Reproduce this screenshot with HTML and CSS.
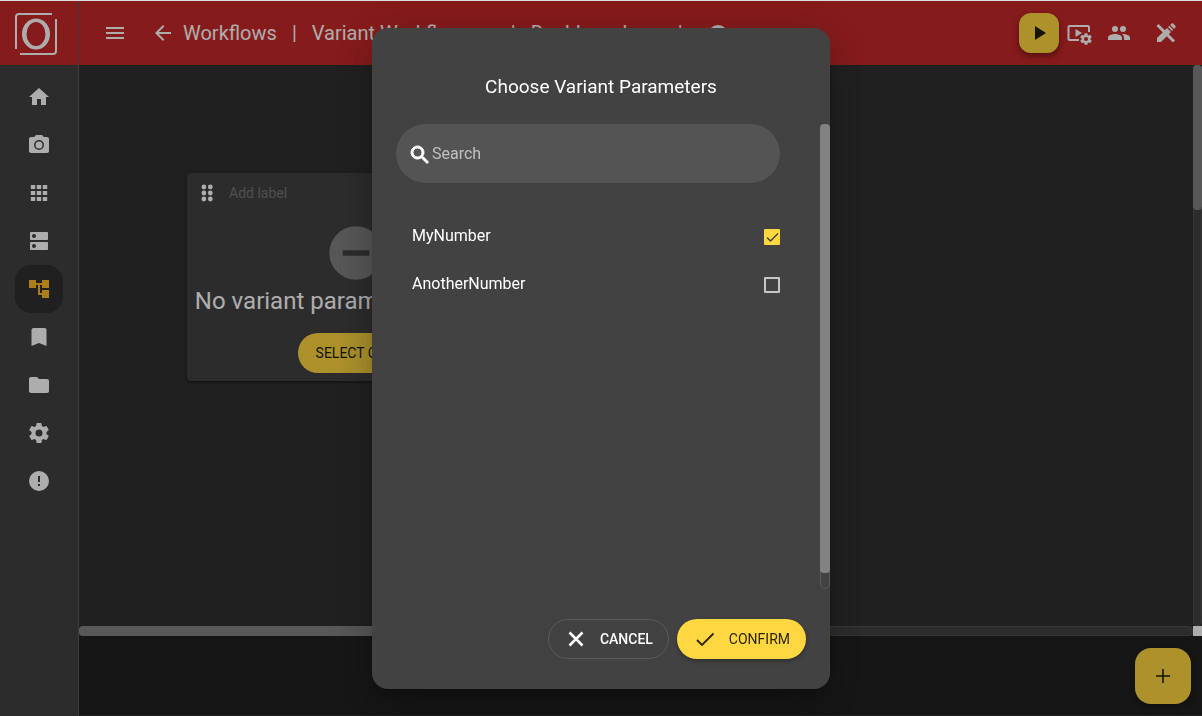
FILE: index.html
```html
<!DOCTYPE html>
<html lang="en">
<head>
    <meta charset="UTF-8">
    <meta name="viewport" content="width=device-width, initial-scale=1">
    <title>Variant Workflows</title>
    <link rel="stylesheet" href="styles.css">
</head>
<body>

<div class="app">
    <aside class="sidebar">
        <a href="#" class="logo" aria-label="Start">
            <svg width="48" height="48" viewBox="0 0 48 48">
                <path d="M4 40V8a3 3 0 0 1 3-3h33M44 10v32a3 3 0 0 1-3 3H8" fill="none" stroke="currentColor" stroke-width="2"/>
                <path d="M24 9.500a14 15.500 0 1 0 0 31 14 15.500 0 0 0 0-31zm0 3.500a9.500 12 0 1 1 0 24 9.500 12 0 0 1 0-24z" fill="currentColor"/>
            </svg>
        </a>
        <nav class="nav">
            <a href="#" class="nav-item" aria-label="Home">
                <svg class="icon" viewBox="0 0 24 24"><path d="M10 20v-6h4v6h5v-8h3L12 3 2 12h3v8z"/></svg>
            </a>
            <a href="#" class="nav-item" aria-label="Camera">
                <svg class="icon" viewBox="0 0 24 24"><path d="M20 4h-3.200L15 2H9L7.200 4H4c-1.100 0-2 .9-2 2v12c0 1.100.9 2 2 2h16c1.100 0 2-.9 2-2V6c0-1.100-.9-2-2-2zM12 17a5 5 0 1 1 0-10 5 5 0 0 1 0 10zm0-1.500a3.500 3.500 0 1 0 0-7 3.500 3.500 0 0 0 0 7z"/></svg>
            </a>
            <a href="#" class="nav-item" aria-label="Apps">
                <svg class="icon" viewBox="0 0 24 24"><path d="M3.800 4h4.400v4H3.800zM9.800 4h4.400v4H9.800zM15.800 4h4.400v4h-4.400zM3.800 10h4.400v4H3.800zM9.800 10h4.400v4H9.800zM15.800 10h4.400v4h-4.400zM3.800 16h4.400v4H3.800zM9.800 16h4.400v4H9.800zM15.800 16h4.400v4h-4.400z"/></svg>
            </a>
            <a href="#" class="nav-item" aria-label="Storage">
                <svg class="icon" viewBox="0 0 24 24"><path d="M20 13H4c-.55 0-1 .45-1 1v6c0 .55.45 1 1 1h16c.55 0 1-.45 1-1v-6c0-.55-.45-1-1-1zM7 19a2 2 0 1 1 0-4 2 2 0 0 1 0 4zM20 3H4c-.55 0-1 .45-1 1v6c0 .55.45 1 1 1h16c.55 0 1-.45 1-1V4c0-.55-.45-1-1-1zM7 9a2 2 0 1 1 0-4 2 2 0 0 1 0 4z"/></svg>
            </a>
            <a href="#" class="nav-item active" aria-label="Workflows">
                <svg class="icon" viewBox="0 0 24 24"><path d="M22 11V3h-7v3H9V3H2v8h7V8h2v10h4v3h7v-8h-7v3h-2V8h2v3z"/></svg>
            </a>
            <a href="#" class="nav-item" aria-label="Bookmarks">
                <svg class="icon" viewBox="0 0 24 24"><path d="M17.500 3h-11c-1 0-2 .9-2 2v16l7.500-3 7.500 3V5c0-1.100-.9-2-2-2z"/></svg>
            </a>
            <a href="#" class="nav-item" aria-label="Files">
                <svg class="icon" viewBox="0 0 24 24"><path d="M10 4H4c-1.100 0-2 .9-2 2v12c0 1.100.9 2 2 2h16c1.100 0 2-.9 2-2V8c0-1.100-.9-2-2-2h-8z"/></svg>
            </a>
            <a href="#" class="nav-item" aria-label="Settings">
                <svg class="icon" viewBox="0 0 24 24"><use href="#gear"/></svg>
            </a>
            <a href="#" class="nav-item" aria-label="Errors">
                <svg class="icon" viewBox="0 0 24 24"><path d="M12 2a10 10 0 1 0 0 20 10 10 0 0 0 0-20zm1 15h-2v-2h2zm0-4h-2V7h2z"/></svg>
            </a>
        </nav>
    </aside>

    <div class="page">
        <header class="toolbar">
            <button class="icon-button menu" aria-label="Menu">
                <svg class="icon" viewBox="0 0 24 24"><path d="M3 18h18v-2H3zm0-5h18v-2H3zm0-7v2h18V6z"/></svg>
            </button>
            <a href="#" class="back">
                <svg class="icon" viewBox="0 0 24 24"><path d="M20 11H7.830l5.590-5.590L12 4l-8 8 8 8 1.410-1.410L7.830 13H20z"/></svg>
                Workflows
            </a>
            <span class="divider">|</span>
            <a href="#" class="crumb crumb-wide">Variant Workflows</a>
            <span class="divider">|</span>
            <a href="#" class="crumb crumb-last">Dashboard</a>
            <span class="divider">|</span>
            <button class="icon-button help" aria-label="Help">
                <svg class="icon" viewBox="0 0 24 24"><path d="M12 4a10 10 0 1 0 0 20 10 10 0 0 0 0-20zm1 15h-2v-2h2zm0-4h-2V9h2z"/></svg>
            </button>

            <div class="actions">
                <button class="play" aria-label="Run">
                    <svg class="icon" viewBox="0 0 24 24"><path d="M8 5v14l11-7z"/></svg>
                </button>
                <button class="icon-button" aria-label="Run settings">
                    <svg class="icon" viewBox="0 0 24 24">
                        <path d="M2.500 4H21c1.100 0 2 .9 2 2v5h-2V6H2.500v12H12v2H2.500c-1.100 0-2-.9-2-2V6c0-1.100.9-2 2-2zM8.500 8v8l6.500-4z"/>
                        <svg x="12" y="11" width="14" height="14" viewBox="0 0 24 24"><use href="#gear"/></svg>
                    </svg>
                </button>
                <button class="icon-button" aria-label="People">
                    <svg class="icon" viewBox="0 0 24 24"><path d="M16 11a3 3 0 1 0 0-6 3 3 0 0 0 0 6zm-8 0a3 3 0 1 0 0-6 3 3 0 0 0 0 6zm0 2c-2.330 0-7 1.170-7 3.500V19h14v-2.500c0-2.330-4.670-3.500-7-3.500zm8 0c-.29 0-.62.02-.97.05 1.160.84 1.970 1.970 1.970 3.450V19h6v-2.500c0-2.330-4.670-3.500-7-3.500z"/></svg>
                </button>
                <button class="icon-button design" aria-label="Design">
                    <svg class="icon" viewBox="0 0 24 24">
                        <path d="M3.500 4l16.500 16.500" fill="none" stroke="currentColor" stroke-width="3"/>
                        <path d="M3 21v-4L13 7l4 4L7 21zM14 6l1.200-1.200 4 4L18 10zM16.200 4l1.300-1.300c.5-.5 1.300-.5 1.800 0l2 2c.5.5.5 1.300 0 1.800L20.100 7.900z"/>
                    </svg>
                </button>
            </div>
        </header>

        <div class="workspace">
            <main class="board">
                <section class="card">
                    <div class="card-header">
                        <svg class="icon" viewBox="0 0 24 24"><path d="M6.500 6a2.400 2.400 0 1 0 4.800 0 2.400 2.400 0 1 0-4.800 0M12.900 6a2.400 2.400 0 1 0 4.800 0 2.400 2.400 0 1 0-4.800 0M6.500 12a2.400 2.400 0 1 0 4.800 0 2.400 2.400 0 1 0-4.800 0M12.900 12a2.400 2.400 0 1 0 4.800 0 2.400 2.400 0 1 0-4.800 0M6.500 18a2.400 2.400 0 1 0 4.800 0 2.400 2.400 0 1 0-4.800 0M12.900 18a2.400 2.400 0 1 0 4.800 0 2.400 2.400 0 1 0-4.800 0"/></svg>
                        <input type="text" class="card-label" placeholder="Add label" aria-label="Label">
                    </div>
                    <svg class="empty-icon" viewBox="0 0 24 24"><path d="M12 2a10 10 0 1 0 0 20 10 10 0 0 0 0-20zm5 11H7v-2h10z"/></svg>
                    <h2>No variant parameters chosen</h2>
                    <button class="select-button">SELECT ONE</button>
                </section>
            </main>
            <div class="scroll-v"><div class="thumb"></div></div>
            <div class="scroll-h"><div class="thumb"></div></div>
            <div class="scroll-corner"></div>
        </div>

        <footer class="bottom-bar">
            <button class="add-button" aria-label="Add">
                <svg class="icon" viewBox="0 0 24 24"><path d="M5 12h14M12 5v14" stroke="currentColor" stroke-width="1.600"/></svg>
            </button>
        </footer>
    </div>
</div>

<div class="overlay">
    <form class="dialog" role="dialog" aria-labelledby="dialog-title">
        <h1 id="dialog-title">Choose Variant Parameters</h1>
        <div class="dialog-body">
            <div class="dialog-content">
                <label class="search">
                    <svg class="icon" viewBox="0 -2 24 24"><path d="M15.500 14h-.79l-.28-.27A6.500 6.500 0 1 0 13.730 14.430l.27.28v.79l5 5L20.500 19zM9.500 14a4.500 4.500 0 1 1 0-9 4.500 4.500 0 0 1 0 9z" stroke="currentColor"/></svg>
                    <input type="text" placeholder="Search">
                </label>
                <label class="option">
                    MyNumber
                    <span class="check">
                        <input type="checkbox" checked>
                        <svg viewBox="0 0 16 16"><path d="M3 8.500l3.500 3.500L14 4.500"/></svg>
                    </span>
                </label>
                <label class="option">
                    AnotherNumber
                    <span class="check">
                        <input type="checkbox">
                        <svg viewBox="0 0 16 16"><path d="M3 8.500l3.500 3.500L14 4.500"/></svg>
                    </span>
                </label>
            </div>
            <div class="dialog-scroll"><div class="thumb"></div></div>
        </div>
        <div class="dialog-actions">
            <button type="button" class="cancel">
                <svg class="icon" viewBox="0 0 24 24"><path d="M5.500 5.500l13 13M18.500 5.500l-13 13" stroke="currentColor" stroke-width="2.600"/></svg>
                CANCEL
            </button>
            <button type="submit" class="confirm">
                <svg class="icon" viewBox="0 0 24 24"><path d="M4 13l5 5L20.500 6.500" fill="none" stroke="currentColor" stroke-width="1.800"/></svg>
                CONFIRM
            </button>
        </div>
    </form>
</div>

<!-- shared shapes -->
<svg width="0" height="0" class="defs">
    <defs>
        <path id="gear" d="M19.430 12.980c.04-.32.07-.64.07-.98s-.03-.66-.07-.98l2.110-1.650c.19-.15.24-.42.12-.64l-2-3.460c-.12-.22-.39-.3-.61-.22l-2.490 1c-.52-.4-1.080-.73-1.690-.98l-.38-2.650A.49.49 0 0 0 14 2h-4c-.25 0-.46.18-.49.42l-.38 2.650c-.61.25-1.170.59-1.690.98l-2.490-1c-.23-.09-.49 0-.61.22l-2 3.460c-.13.22-.07.49.12.64l2.110 1.650c-.04.32-.07.65-.07.98s.03.66.07.98l-2.110 1.650c-.19.15-.24.42-.12.64l2 3.460c.12.22.39.3.61.22l2.490-1c.52.4 1.080.73 1.690.98l.38 2.650c.03.24.24.42.49.42h4c.25 0 .46-.18.49-.42l.38-2.650c.61-.25 1.170-.59 1.690-.98l2.490 1c.23.09.49 0 .61-.22l2-3.460c.12-.22.07-.49-.12-.64zM12 15.500a3.500 3.500 0 1 1 0-7 3.500 3.500 0 0 1 0 7z"/>
    </defs>
</svg>

</body>
</html>
```
FILE: styles.css
```css
* {
    box-sizing: border-box;
}

body {
    margin: 0;
    font-family: Roboto, "Liberation Sans", sans-serif;
    color: #fff;
    background-color: #303030;
}

button,
input {
    font-family: inherit;
    color: inherit;
}

button {
    display: flex;
    align-items: center;
    justify-content: center;
    margin: 0;
    padding: 0;
    border: none;
    background: none;
    font-size: 14px;
    cursor: pointer;
}

a {
    color: inherit;
    text-decoration: none;
}

.defs {
    position: absolute;
}

.icon {
    width: 24px;
    height: 24px;
    flex: none;
    fill: currentColor;
    overflow: visible;
}

.app {
    display: flex;
    height: 100vh;
    border-top: 1px solid #e0e0e0;
}

/* sidebar */
.sidebar {
    width: 79px;
    flex: none;
    background-color: #424242;
    border-right: 1px solid #5a5a5a;
}

.logo {
    display: flex;
    align-items: center;
    height: 64px;
    padding-left: 12px;
    background-color: #c62828;
}

.nav {
    display: flex;
    flex-direction: column;
    align-items: center;
    padding-top: 8px;
}

.nav-item {
    display: flex;
    align-items: center;
    justify-content: center;
    width: 48px;
    height: 48px;
    border-radius: 16px;
}

.nav-item.active {
    background-color: #303030;
    color: #ffb92a;
}

/* toolbar */
.page {
    flex: 1;
    min-width: 0;
    display: flex;
    flex-direction: column;
}

.toolbar {
    display: flex;
    align-items: center;
    height: 64px;
    flex: none;
    padding-right: 16px;
    background-color: #c62828;
    font-size: 20px;
    white-space: nowrap;
}

.icon-button {
    width: 40px;
    height: 40px;
}

.menu {
    margin: 0 16px;
}

.back {
    display: flex;
    align-items: center;
    gap: 8px;
}

.divider {
    margin: 0 15px;
}

.crumb-wide {
    width: 184px;
}

.crumb-last {
    width: 132px;
}

.actions {
    display: flex;
    align-items: center;
    margin-left: auto;
}

.play {
    width: 40px;
    height: 40px;
    border-radius: 12px;
    background-color: #ffd740;
    color: #211c08;
    box-shadow: 0 3px 6px rgba(0, 0, 0, .4);
}

.design {
    margin-left: 7px;
}

/* board */
.workspace {
    flex: 1;
    min-height: 0;
    display: grid;
    grid-template-columns: 1fr 9px;
    grid-template-rows: 1fr 10px;
}

.board {
    overflow: hidden;
    padding: 108px;
}

.card {
    display: flex;
    flex-direction: column;
    align-items: center;
    width: 337px;
    padding-bottom: 8px;
    border-radius: 4px;
    background-color: #424242;
    box-shadow: 0 1px 3px rgba(0, 0, 0, .5);
}

.card-header {
    display: flex;
    align-items: center;
    align-self: stretch;
    gap: 8px;
    height: 40px;
    margin-bottom: 8px;
    padding: 0 8px;
}

.card-label {
    flex: 1;
    border: none;
    background: none;
    font-size: 14px;
}

.card-label::placeholder {
    color: #757575;
}

.empty-icon {
    width: 64px;
    height: 64px;
    fill: #828282;
}

.card h2 {
    margin: 0 0 16px;
    font-size: 24px;
    font-weight: 400;
    line-height: 32px;
    white-space: nowrap;
}

.select-button {
    height: 40px;
    padding: 0 18px;
    border-radius: 20px;
    background-color: #ffd740;
    color: #211c08;
}

/* scrollbars */
.scroll-v,
.scroll-h {
    border: 1px solid #505050;
    border-radius: 4px;
    background-color: #424242;
}

.thumb {
    border-radius: 4px;
    background-color: #828282;
}

.scroll-v .thumb {
    height: 26%;
    margin: -1px;
}

.scroll-h .thumb {
    width: 50%;
    height: 10px;
    margin: -1px;
}

.scroll-corner {
    background-color: #fff;
}

/* bottom bar */
.bottom-bar {
    display: flex;
    justify-content: flex-end;
    flex: none;
    height: 80px;
    padding: 12px 11px;
    border-bottom: 1px solid #303030;
    background-color: #212121;
}

.add-button {
    width: 56px;
    height: 56px;
    border-radius: 16px;
    background-color: #ffd740;
    color: #211c08;
    box-shadow: 0 3px 6px rgba(0, 0, 0, .3);
}

/* dialog */
.overlay {
    position: fixed;
    inset: 1px 0 0;
    display: flex;
    align-items: center;
    justify-content: center;
    background-color: rgba(0, 0, 0, .32);
}

.dialog {
    width: 458px;
    max-width: 80vw;
    border-radius: 16px;
    background-color: #424242;
    box-shadow: 0 11px 15px -7px rgba(0, 0, 0, .2),
        0 24px 38px 3px rgba(0, 0, 0, .14),
        0 9px 46px 8px rgba(0, 0, 0, .12);
}

.dialog h1 {
    margin: 0;
    padding: 43px 24px 21px;
    font-size: 19px;
    font-weight: 400;
    line-height: 32px;
    text-align: center;
}

.dialog-body {
    display: flex;
    height: 65vh;
}

.dialog-content {
    flex: 1;
    padding: 0 40px 0 24px;
}

.search {
    display: flex;
    align-items: center;
    height: 59px;
    margin-bottom: 29px;
    padding: 0 12px;
    border-radius: 30px;
    background-color: #545454;
}

.search input {
    flex: 1;
    padding: 0;
    border: none;
    outline: none;
    background: none;
    font-size: 16px;
}

.search input::placeholder {
    color: #c0c0c0;
}

.option {
    display: flex;
    align-items: center;
    justify-content: space-between;
    height: 48px;
    padding-left: 16px;
    font-size: 16px;
}

.check {
    position: relative;
    height: 16px;
    margin-top: 2px;
}

.check input {
    appearance: none;
    display: block;
    width: 16px;
    height: 16px;
    margin: 0;
    border: 2px solid #c6c6c6;
    border-radius: 1px;
}

.check input:checked {
    border-color: #ffd740;
    background-color: #ffd740;
}

.check svg {
    display: none;
    position: absolute;
    inset: 0;
    fill: none;
    stroke: #424242;
    stroke-width: 1.5;
    pointer-events: none;
}

.check input:checked + svg {
    display: block;
}

.dialog-scroll {
    width: 10px;
    border: 1px solid #5a5a5a;
    border-radius: 5px;
}

.dialog-scroll .thumb {
    height: 97%;
    margin: -1px;
    background-color: #828282;
}

.dialog-actions {
    display: flex;
    justify-content: flex-end;
    gap: 8px;
    padding: 30px 24px;
}

.dialog-actions button {
    gap: 12px;
    height: 40px;
    padding: 0 16px;
    border-radius: 20px;
    font-weight: 500;
}

.dialog-actions .cancel {
    padding: 0 15px;
    border: 1px solid #5a5a5a;
}

.dialog-actions .confirm {
    background-color: #ffd740;
    color: #2b240b;
    font-weight: 400;
    box-shadow: 0 2px 4px rgba(0, 0, 0, .3);
}
```
